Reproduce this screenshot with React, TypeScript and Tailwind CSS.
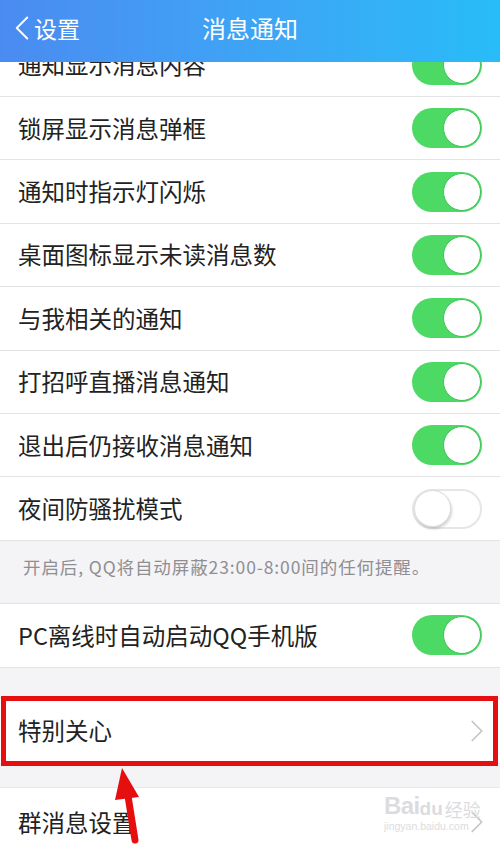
import { ChevronLeft, ChevronRight } from 'lucide-react';

const ROWS: { label: string; on: boolean }[] = [
  { label: '通知显示消息内容', on: true },
  { label: '锁屏显示消息弹框', on: true },
  { label: '通知时指示灯闪烁', on: true },
  { label: '桌面图标显示未读消息数', on: true },
  { label: '与我相关的通知', on: true },
  { label: '打招呼直播消息通知', on: true },
  { label: '退出后仍接收消息通知', on: true },
  { label: '夜间防骚扰模式', on: false },
];

const FONT = "font-['Noto_Sans_CJK_SC','Noto_Sans',sans-serif]";

function Switch({ on }: { on: boolean }) {
  if (on) {
    return (
      <div className="w-[70px] h-[40px] rounded-full bg-[#4cd964] flex items-center justify-end pr-[1px]">
        <div className="w-[38px] h-[38px] rounded-full bg-white border border-[#3fc257]" />
      </div>
    );
  }
  return (
    <div className="w-[70px] h-[40px] rounded-full bg-white border-2 border-[#e6e6e6] flex items-center">
      <div className="w-[37px] h-[37px] rounded-full bg-white border border-[#dcdcdc] shadow-[1px_2px_3px_rgba(0,0,0,0.18)]" />
    </div>
  );
}

function Row({ label, on, height = 'h-[63.4px]' }: { label: string; on: boolean; height?: string }) {
  return (
    <div className={`flex items-center justify-between pl-[18px] pr-[18px] bg-white border-b border-[#e3e3e6] ${height}`}>
      <span className="text-[23.5px] text-[#222]">{label}</span>
      <Switch on={on} />
    </div>
  );
}

function LinkRow({ label }: { label: string }) {
  return (
    <div className="flex items-center justify-between pl-[18px] pr-[4px] bg-white h-full">
      <span className="text-[23.5px] text-[#222]">{label}</span>
      <ChevronRight size={38} strokeWidth={1.1} className="text-[#c4c4c9]" />
    </div>
  );
}

export default function App() {
  return (
    <div className={`w-[500px] h-[849px] overflow-hidden bg-[#f4f4f6] relative ${FONT}`}>
      <div className="relative z-10 h-[62px] flex items-center pb-[6px] bg-gradient-to-r from-[#4a8bf1] to-[#27bcf8] text-white">
        <div className="flex items-center pl-[1px] w-[150px]">
          <ChevronLeft size={42} strokeWidth={1.1} className="-mr-[9px]" />
          <span className="text-[23px]">设置</span>
        </div>
        <div className="flex-1 text-center text-[24px] -ml-[150px]">消息通知</div>
      </div>

      <div className="mt-[-28.4px]">
        {ROWS.map(r => (
          <Row key={r.label} label={r.label} on={r.on} />
        ))}

        <div className="h-[62px] flex items-center pb-[10px] pl-[23px] text-[17.5px] tracking-[0.9px] text-[#8e8e93]">
          开启后, QQ将自动屏蔽23:00-8:00间的任何提醒。
        </div>

        <div className="border-t border-[#e3e3e6]">
          <Row label="PC离线时自动启动QQ手机版" on={true} height="h-[64px]" />
        </div>

        <div className="h-[30px]" />

        <div className="relative h-[66px] border-y border-[#e8e8ea]">
          <LinkRow label="特别关心" />
          <div className="absolute left-[1px] right-[2px] top-[-3px] bottom-[-3px] border-[5px] border-[#e60f0f]" />
        </div>

        <div className="h-[23px]" />

        <div className="relative h-[70px] border-t border-[#e8e8ea]">
          <LinkRow label="群消息设置" />
          <div className="absolute left-[384px] top-[6px] flex flex-col items-start text-[#dcdcdf] leading-none select-none">
            <div className="flex items-end">
              <span className="text-[24px] font-['Liberation_Sans',sans-serif] font-bold tracking-tight">Bai</span>
              <span className="text-[19px] font-['Liberation_Sans',sans-serif] font-bold">du</span>
              <span className="text-[18px] ml-[2px]">经验</span>
            </div>
            <span className="text-[10.5px] mt-[3px] font-['Liberation_Sans',sans-serif]">jingyan.baidu.com</span>
          </div>
        </div>
      </div>

      <svg className="absolute left-0 top-0 pointer-events-none" width="500" height="849" viewBox="0 0 500 849">
        <polygon points="122,768 115,800 139,797" fill="#e60f0f" />
        <line x1="128" y1="796" x2="135" y2="840" stroke="#e60f0f" strokeWidth="7" strokeLinecap="round" />
      </svg>
    </div>
  );
}
